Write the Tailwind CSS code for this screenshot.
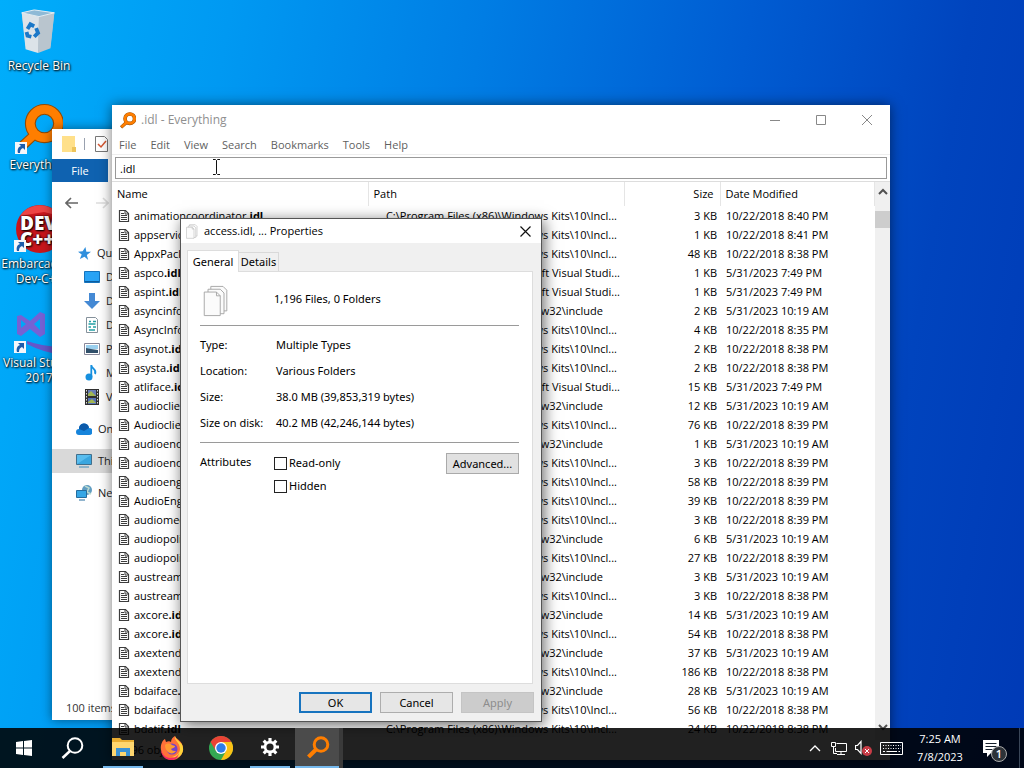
<!DOCTYPE html>
<html lang="en">
<head>
<meta charset="utf-8">
<title>Desktop</title>
<script src="https://cdn.jsdelivr.net/npm/@tailwindcss/browser@4"></script>
</head>
<body class="relative h-screen overflow-hidden bg-[#0060d0] bg-[linear-gradient(100deg,#00aefb_0%,#0099f2_20%,#007de4_42%,#005cd2_65%,#0044be_84%,#003ab6_100%)] font-['Open_Sans','Noto_Sans',sans-serif] text-[11px] leading-4 text-black">

<svg class="hidden">
  <symbol id="magnifier" viewBox="0 0 44 46"><path d="M3 42 17 29" stroke="#8f4a05" stroke-width="9" fill="none"/><circle cx="27" cy="18" r="13" fill="none" stroke="#8f4a05" stroke-width="10"/><path d="M4 41 18 28" stroke="#ff7e00" stroke-width="7" fill="none"/><circle cx="27" cy="18" r="13" fill="none" stroke="#ff7e00" stroke-width="8"/></symbol>
  <symbol id="doc" viewBox="0 0 12 14"><path d="M1.500 1.500h6l3 3v8h-9z" fill="#fff" stroke="#3c3c3c" stroke-width="1.200"/><path d="M7 1.500v3.500h3.500M3 4.500h3M3 6.500h6M3 8.500h6M3 10.500h6" fill="none" stroke="#3c3c3c"/></symbol>
  <symbol id="shortcut" viewBox="0 0 12 12"><path d="M0 0h12v12H0z" fill="#f4f6fa"/><path d="M4 2h6v6L8 6C6 7 5 8 5 11H3C2 8 3 5 6 4z" fill="#1c5cab"/></symbol>
  <symbol id="pages" viewBox="0 0 26 34"><g fill="#fbfbfb" stroke="#a5a5a5"><path d="M7.500 1.500h13l4 4v22h-17z"/><path d="M4.500 4.500h13l4 4v22h-17z"/><path d="M.5 7.500h13l4 4v21H.5z"/><path d="M13.500 7.500v4h4" fill="none"/></g></symbol>
</svg>

<!-- Desktop shortcuts -->
<nav class="flex w-[78px] flex-col text-center text-[12px] text-white [text-shadow:1px_1px_2px_#000,0_0_2px_#000]">
  <a href="#" class="flex h-[98px] flex-col items-center pt-2">
    <svg class="h-[46px] w-10" viewBox="0 0 40 48"><path d="m2 5 13-3 21 3-4 35-13 4-13-4z" fill="#b5c2cc"/><path d="m2 5 18 4-1 38-13-4z" fill="#dce3e8"/><path d="m20 9 16-4-4 37-13 5z" fill="#b9c5ce"/><path d="m2 5 13-3 21 3-16 4z" fill="#8fbad6" stroke="#e4edf2"/><g fill="none" stroke="#1b78c8" stroke-width="4"><path d="m8 22 3-5 4 2"/><path d="m17 21 2 5-4 4"/><path d="m12 30-4-1-1-4"/></g></svg>
    <span class="pt-1">Recycle Bin</span>
  </a>
  <a href="#" class="flex h-[106px] flex-col items-center pt-1.5">
    <span class="relative block"><svg class="h-[50px] w-12"><use href="#magnifier"/></svg><svg class="absolute bottom-0 left-0 size-3"><use href="#shortcut"/></svg></span>
    <span class="pt-[3px]">Everything</span>
  </a>
  <a href="#" class="flex h-[102px] flex-col items-center">
    <span class="relative block"><svg class="size-[50px]" viewBox="0 0 50 50"><circle cx="26" cy="25" r="24" fill="#c8161c"/><path d="M6 12a24 24 0 0 1 40 0L30 8z" fill="#e44"/><text x="6" y="26" font-family="Open Sans" font-size="19" font-weight="800" fill="#fff">DEV</text><text x="6" y="42" font-family="Open Sans" font-size="19" font-weight="800" fill="#fff">C++</text></svg><svg class="absolute bottom-0.5 left-0 size-3"><use href="#shortcut"/></svg></span>
    <span class="pt-0.5 leading-[15px]">Embarcadero<br>Dev-C++</span>
  </a>
  <a href="#" class="flex h-[90px] flex-col items-center pt-0.5">
    <span class="relative block"><svg class="h-[47px] w-[50px]" viewBox="0 0 50 47"><path d="m3 8 4-1 9 6L26 4l5 2v20l-5 3-10-8-9 7-4-2zm4 4v8l5-4zm19-1-6 5 6 6z" fill="#7562d4"/><path d="M13 33q14 5 33 6V4l4 2v41q-20-2-37-11z" fill="#6557c9"/></svg><svg class="absolute bottom-0.5 left-0 size-3"><use href="#shortcut"/></svg></span>
    <span class="leading-[15px]">Visual Studio<br>2017</span>
  </a>
</nav>

<!-- File Explorer window -->
<section class="absolute top-[129px] bottom-12 left-[52px] flex w-[400px] flex-col bg-white shadow-[0_0_10px_#0007]">
  <header class="flex h-[30px] items-center pl-2.5">
    <svg class="h-4 w-3.5" viewBox="0 0 14 16"><path d="M0 0h13v11l1 1v4H0z" fill="#ffe08a"/><path d="M10 11h4v5h-4z" fill="#edc45b"/></svg>
    <span class="ml-2 h-3 w-px bg-gray-400"></span>
    <svg class="ml-2.5 h-4 w-[13px]" viewBox="0 0 13 16"><path d="M.5.5h9l3 3v12H.5z" fill="#fff" stroke="#777"/><path d="m3 8 3 3 5-6" fill="none" stroke="#d4552f" stroke-width="1.500"/></svg>
  </header>
  <button class="h-[23px] w-14 bg-[#0f62b0] text-white">File</button>
  <div class="flex h-[43px] gap-4 pt-[15px] pl-[13px]">
    <svg class="h-3 w-3.5" viewBox="0 0 14 12"><path d="M13 6H1m5-5L1 6l5 5" fill="none" stroke="#666" stroke-width="1.600"/></svg>
    <svg class="h-3 w-3.5" viewBox="0 0 14 12"><path d="M1 6h12M8 1l5 5-5 5" fill="none" stroke="#ddd" stroke-width="1.600"/></svg>
  </div>
  <nav class="flex grow flex-col pt-4 text-[#222] *:flex *:h-6 *:shrink-0 *:items-center">
    <a href="#" class="gap-1.5 pl-[26px]"><svg class="size-[13px]" viewBox="0 0 14 14"><path d="m8 0 1 5h5L9.500 8.500 11 14 7 10.500 2 13l2-5L0 5l5-.5z" fill="#2f8fdd"/></svg>Quick access</a>
    <a href="#" class="gap-1.5 pl-8"><svg class="h-3 w-4" viewBox="0 0 16 12"><path d="M.5.5h15v11H.5z" fill="#29a3f5" stroke="#1573bd"/><path d="M1 10.500h14" stroke="#0c5d9f"/></svg>Desktop</a>
    <a href="#" class="gap-1.5 pl-8"><svg class="size-4" viewBox="0 0 16 16"><path d="M5 0h6v8h5l-8 8-8-8h5z" fill="#4489d4"/></svg>Downloads</a>
    <a href="#" class="gap-1.5 pl-8"><svg class="size-4" viewBox="0 0 16 16"><path d="M2.500.5h9l2 2v13h-11z" fill="#fff" stroke="#85919b"/><path d="M5 4.500h2m2 0h3M4.500 7h7m-7 3H7m2 0h3m-7 3h6" stroke="#23a0a5" stroke-width="1.500"/></svg>Documents</a>
    <a href="#" class="gap-1.5 pl-8"><svg class="h-3 w-4" viewBox="0 0 16 12"><path d="M.5.5h15v11H.5z" fill="#fff" stroke="#889"/><path d="M2 2h12v4H2z" fill="#9ad0ef"/><path d="m2 5 5 1 7 1v3H2z" fill="#31506a"/></svg>Pictures</a>
    <a href="#" class="gap-1.5 pl-8"><svg class="size-4" viewBox="0 0 16 16"><circle cx="5" cy="12" r="3.500" fill="#1690df"/><path d="M7.300 12V0c0 4 6 4 3.700 9" fill="none" stroke="#1690df" stroke-width="1.800"/></svg>Music</a>
    <a href="#" class="gap-1.5 pl-8"><svg class="size-4" viewBox="0 0 16 16"><path d="M1 0h14v16H1z" fill="#303030"/><path d="M4 1h8v6H4z" fill="#687cb8"/><path d="M4 9h8v6H4z" fill="#5871b8"/><path d="m4 5 3-3 5 5H4m0 6 4-3 4 4H4" fill="#a2b652"/><path d="M2.500 1v14m11-14v14" stroke="#ddd" stroke-dasharray="1.500 1.500"/></svg>Videos</a>
    <a href="#" class="mt-2 gap-1.5 pl-6"><svg class="h-3 w-4" viewBox="0 0 16 12"><path d="M3 12a3 3 0 0 1 0-6 5 5 0 0 1 10-1 3.500 3.500 0 0 1 0 7z" fill="#1684db"/><path d="M3 6a5 5 0 0 1 10-1L8 8z" fill="#0b5aaa"/></svg>OneDrive</a>
    <a href="#" class="mt-2 gap-1.5 bg-[#d9d9d9] pl-6"><svg class="h-3.5 w-4" viewBox="0 0 16 14"><path d="M.5.5h15v10H.5z" fill="#59bdee" stroke="#416f8c"/><path d="M1 10 15 1v9z" fill="#3aa6df"/><path d="M3 13h10" stroke="#438dba"/></svg>This PC</a>
    <a href="#" class="mt-2 gap-1.5 pl-6"><svg class="size-4" viewBox="0 0 16 16"><circle cx="11" cy="5" r="5" fill="#609dc1"/><path d="m9 1 4 2-2 4 4 2" stroke="#b9d9d0" stroke-width="1.500" fill="none"/><path d="M.5 5.500h10v7H.5z" fill="#35a6e5" stroke="#256c9d"/><path d="M3 15h6" stroke="#256c9d"/></svg>Network</a>
  </nav>
  <footer class="h-5 pl-3.5 text-[#333]">100 items</footer>
</section>

<!-- Everything window -->
<section class="absolute top-[105px] bottom-2 left-28 flex w-[778px] flex-col bg-white shadow-[0_0_12px_#0008]">
  <header class="flex h-[30px] shrink-0 items-center pl-2 text-[#8f8f8f]">
    <svg class="h-[17px] w-4"><use href="#magnifier"/></svg>
    <h1 class="grow pl-[5px] text-[12px]">.idl - Everything</h1>
    <button aria-label="Minimize" class="flex w-[46px] justify-center"><svg class="size-2.5"><path d="M0 5.500h10" stroke="#888"/></svg></button>
    <button aria-label="Maximize" class="flex w-[46px] justify-center"><svg class="size-2.5"><path d="M.5.5h9v9h-9z" fill="none" stroke="#888"/></svg></button>
    <button aria-label="Close" class="flex w-[46px] justify-center"><svg class="size-2.5"><path d="m0 0 10 10M10 0 0 10" stroke="#888"/></svg></button>
  </header>
  <nav class="flex h-5 shrink-0 items-center gap-3.5 border-b border-[#eee] pl-[7px] text-[#5f5f5f]">
    <button>File</button><button>Edit</button><button>View</button><button>Search</button><button>Bookmarks</button><button>Tools</button><button>Help</button>
  </nav>
  <div class="h-[26px] shrink-0 px-[3px] pt-0.5"><input aria-label="Search" value=".idl" class="block h-[22px] w-full border border-[#999] px-1"></div>
  <div class="flex min-h-0 grow border-t border-[#ddd]">
    <div class="min-w-0 grow overflow-hidden">
      <table class="w-full table-fixed border-collapse whitespace-nowrap">
        <colgroup><col class="w-64"><col class="w-64"><col class="w-24"><col></colgroup>
        <thead><tr class="h-6 text-left *:border-r *:border-[#e5e5e5] *:p-0 *:font-normal"><th><span class="pl-[5px]">Name</span></th><th><span class="pl-[5px]">Path</span></th><th class="text-right"><span class="pr-1.5">Size</span></th><th><span class="pl-[5px]">Date Modified</span></th></tr></thead>
        <tbody id="files"></tbody>
      </table>
    </div>
    <div class="flex w-[17px] flex-col items-center bg-[#f0f0f0]">
      <svg class="mt-1.5 h-2 w-2.5"><path d="m1 6 4-4 4 4" fill="none" stroke="#505050" stroke-width="2"/></svg>
      <div class="mt-[15px] h-[17px] w-[15px] bg-[#cdcdcd]"></div>
      <svg class="mt-auto mb-2 h-2 w-2.5"><path d="m1 1 4 4 4-4" fill="none" stroke="#505050" stroke-width="2"/></svg>
    </div>
  </div>
  <footer class="h-5 shrink-0 bg-white pt-0.5 pl-1">1,196 objects</footer>
</section>

<!-- Properties dialog -->
<section role="dialog" aria-label="Properties" class="absolute top-[218px] left-[180px] flex h-[504px] w-[362px] flex-col border border-[#555] bg-[#f0f0f0] font-['Noto_Sans',sans-serif] shadow-[2px_3px_14px_#0009]">
  <header class="flex h-6 shrink-0 items-center bg-white pr-2.5 pl-[5px]">
    <svg class="h-[15px] w-3"><use href="#pages"/></svg>
    <h2 class="grow pl-1.5 font-['Open_Sans']">access.idl, ... Properties</h2>
    <button aria-label="Close"><svg class="size-[11px]"><path d="m.5.500 10 10m0-10-10 10" stroke="#111" stroke-width="1.200"/></svg></button>
  </header>
  <div class="flex h-7 shrink-0 items-end pl-1.5">
    <button class="z-10 -mb-px h-[22px] w-[52px] border border-b-0 border-[#ddd] bg-white">General</button>
    <button class="h-[19px] w-10 border border-b-0 border-l-0 border-[#d9d9d9]">Details</button>
  </div>
  <div class="mr-2 ml-1.5 flex grow flex-col border border-[#ddd] bg-white pr-[13px] pl-3">
    <div class="flex h-[54px] items-center border-b border-[#9a9a9a] pl-[3px]">
      <svg class="mt-1 h-8 w-[26px]"><use href="#pages"/></svg><span class="pl-[45px]">1,196 Files, 0 Folders</span>
    </div>
    <dl class="grid grid-cols-[76px_1fr] gap-y-2.5 border-b border-[#9a9a9a] pt-[11px] pb-[11px]">
      <dt>Type:</dt><dd>Multiple Types</dd>
      <dt>Location:</dt><dd>Various Folders</dd>
      <dt>Size:</dt><dd>38.0 MB (39,853,319 bytes)</dd>
      <dt>Size on disk:</dt><dd>40.2 MB (42,246,144 bytes)</dd>
    </dl>
    <div class="flex items-start pt-2.5">
      <span class="w-[74px] pt-px">Attributes</span>
      <div class="flex grow flex-col gap-[7px] pt-0.5">
        <label class="flex items-center gap-0.5"><input type="checkbox" class="size-[13px] appearance-none border border-[#222] bg-white">Read-only</label>
        <label class="flex items-center gap-0.5"><input type="checkbox" class="size-[13px] appearance-none border border-[#222] bg-white">Hidden</label>
      </div>
      <button class="h-[21px] w-[73px] border border-[#aaa] bg-[#e1e1e1]">Advanced...</button>
    </div>
  </div>
  <footer class="flex h-[37px] shrink-0 items-center justify-end gap-2 pr-[7px]">
    <button class="h-[21px] w-[73px] border-2 border-[#1874bf] bg-[#e6e6e6]">OK</button>
    <button class="h-[21px] w-[73px] border border-[#adadad] bg-[#e6e6e6]">Cancel</button>
    <button disabled class="h-[21px] w-[73px] border border-[#c4c4c4] bg-[#cccccc] text-[#8d8d8d]">Apply</button>
  </footer>
</section>

<!-- Text cursor -->
<svg class="absolute top-[159px] left-[212px] h-4 w-[9px]"><path d="M1 .5h2.500l1 1 1-1H8m-3.500 1v13m-3.500 1h2.500l1-1 1 1H8" fill="none" stroke="#111"/></svg>

<!-- Taskbar -->
<footer class="absolute inset-x-0 bottom-0 flex h-10 bg-black/87 text-white">
  <button aria-label="Start" class="flex w-12 items-center justify-center"><svg class="size-4" viewBox="0 0 16 16"><path d="m0 2 7-1v6.500H0zm8-1 8-1v7.500H8zM0 8.500h7V15l-7-1zm8 0h8V16l-8-1z" fill="#fff"/></svg></button>
  <button aria-label="Search" class="flex w-12 items-center justify-center"><svg class="h-[22px] w-[23px]" viewBox="0 0 23 22"><circle cx="14" cy="8.500" r="7.300" fill="none" stroke="#fff" stroke-width="2"/><path d="m9 14-7.500 7" stroke="#fff" stroke-width="2.500"/></svg></button>
  <button aria-label="File Explorer" class="ml-0.5 flex w-[49px] flex-col items-center"><span class="flex grow items-center"><svg class="h-[18px] w-[22px]" viewBox="0 0 22 18"><path d="M0 0h8l2 2h12v16H0z" fill="#e9ad32"/><path d="M0 4h22v14H0z" fill="#ffd66f"/><path d="M4 18v-8h14v8h-4v-4H8v4z" fill="#3c92d4"/></svg></span><span class="h-0.5 w-10 bg-[#76b9ed]"></span></button>
  <button aria-label="Firefox" class="flex w-[49px] items-center justify-center"><svg class="size-6" viewBox="0 0 24 24"><path d="M1 14C0 8 3 4 5 3l1 3c2-1 4-1 5 0 0-3 2-5 4-6 0 3 8 4 8 13 0 6-5 11-11 11S2 20 1 14z" fill="#ff7139"/><path d="M15 0c-1 5 5 6 5 13 0 3-3 7-8 8 7 3 12-4 11-9 0-6-7-7-8-12z" fill="#ffd43a"/><path d="M1 14c2 7 7 8 10 8 5 0 7-3 8-5-1 5-4 7-8 7-5 0-10-4-10-10z" fill="#f52764"/><circle cx="12" cy="13" r="5.500" fill="#7542c9"/><path d="M5 9c3-3 6-1 7 0l3 1c0 2-3 2-4 3 1 2 3 2 5 2-3 5-11 2-11-6z" fill="#ff9b31"/></svg></button>
  <button aria-label="Chrome" class="flex w-[49px] items-center justify-center"><svg class="size-6" viewBox="0 0 24 24"><circle cx="12" cy="12" r="12" fill="#34a853"/><path d="M1.600 6A12 12 0 0 1 22.400 6H12L7 15z" fill="#ea4335"/><path d="M22.400 6A12 12 0 0 1 12 24l5-9-5-9z" fill="#fbc116"/><circle cx="12" cy="12" r="6" fill="#fff"/><circle cx="12" cy="12" r="4.700" fill="#2f7de9"/></svg></button>
  <button aria-label="Settings" class="flex w-[50px] flex-col items-center"><span class="flex grow items-center"><svg class="size-[18px]" viewBox="0 0 20 20"><circle cx="10" cy="10" r="5.500" fill="none" stroke="#fff" stroke-width="3"/><path d="M10 0v4m0 12v4M0 10h4m12 0h4M3 3l3 3m8 8 3 3m0-14-3 3M3 17l3-3" stroke="#fff" stroke-width="3.500"/></svg></span><span class="h-0.5 w-10 bg-[#76b9ed]"></span></button>
  <button aria-label="Everything" class="flex w-12 flex-col items-center border-r-4 border-[#3a3a3a] bg-[#4b4b4b]"><span class="flex grow items-center pl-0.5"><svg class="h-[22px] w-[23px]" viewBox="0 0 23 22"><circle cx="14" cy="8.500" r="6.800" fill="none" stroke="#ff7e00" stroke-width="3"/><path d="M9 13.500 1.500 21" stroke="#ff7e00" stroke-width="4"/></svg></span><span class="h-0.5 w-full bg-[#76b9ed]"></span></button>
  <div class="ml-auto flex items-center">
    <svg class="h-2 w-3"><path d="m1 7 5-5 5 5" fill="none" stroke="#fff" stroke-width="1.300"/></svg>
    <svg class="ml-2.5 h-[15px] w-[17px]" viewBox="0 0 17 15"><path d="M5.500 2.500h10v8h-11V7M10 10.500v3m-4 0h8M.5 1.500h4v4h-4zM2.500 5v7.500H6" fill="none" stroke="#fff"/></svg>
    <svg class="ml-[7px] h-4 w-[17px]" viewBox="0 0 17 16"><path d="M.5 5.500h2l3.500-4v12l-3.500-4h-2z" fill="none" stroke="#fff" stroke-width="1.200"/><circle cx="12" cy="11" r="5" fill="#c83c46"/><path d="m10 9 4 4m0-4-4 4" stroke="#fff"/></svg>
    <svg class="ml-2 h-[13px] w-[23px]" viewBox="0 0 23 13"><path d="M.5.5h22v12H.5z" fill="none" stroke="#fff"/><path d="M3 3.500h18M3 6.500h18" stroke="#fff" stroke-dasharray="1 1.500"/><path d="M3 9.500h2m1.500 0H17m1.500 0H20" stroke="#fff"/></svg>
    <time class="w-[74px] text-center leading-[18px]">7:25 AM<br>7/8/2023</time>
    <button aria-label="Notifications" class="relative ml-1.5 w-9"><svg class="h-[17px] w-4" viewBox="0 0 16 17"><path d="M0 0h16v13H8l-4 4v-4H0z" fill="#fff"/><path d="M2.500 3.500h11m-11 3h11m-11 3h7" stroke="#16202c"/></svg><span class="absolute top-1.5 left-2 flex size-4 items-center justify-center rounded-full border border-[#aaa] bg-[#2d3238] font-semibold">1</span></button>
    <span class="h-full w-px bg-[#3a4658]"></span><span class="w-1"></span>
  </div>
</footer>

<script>
const kits = 'C:\\Program Files (x86)\\Windows Kits\\10\\Incl...';
const studio = 'C:\\Program Files (x86)\\Microsoft Visual Studi...';
const gcc = 'C:\\Program Files\\mingw\\i686-w64-mingw32\\include';
const rows = [
  ['animationcoordinator', kits, 3, '10/22/2018 8:40 PM'],
  ['appserviceinterop', kits, 1, '10/22/2018 8:41 PM'],
  ['AppxPackaging', kits, 48, '10/22/2018 8:38 PM'],
  ['aspco', studio, 1, '5/31/2023 7:49 PM'],
  ['aspint', studio, 1, '5/31/2023 7:49 PM'],
  ['asyncinfo', gcc, 2, '5/31/2023 10:19 AM'],
  ['AsyncInfo', kits, 4, '10/22/2018 8:35 PM'],
  ['asynot', kits, 2, '10/22/2018 8:38 PM'],
  ['asysta', kits, 2, '10/22/2018 8:38 PM'],
  ['atliface', studio, 15, '5/31/2023 7:49 PM'],
  ['audioclient', gcc, 12, '5/31/2023 10:19 AM'],
  ['Audioclient', kits, 76, '10/22/2018 8:39 PM'],
  ['audioendpoints', gcc, 1, '5/31/2023 10:19 AM'],
  ['audioendpoints', kits, 3, '10/22/2018 8:39 PM'],
  ['audioenginebaseapo', kits, 58, '10/22/2018 8:39 PM'],
  ['AudioEngineEndpoint', kits, 39, '10/22/2018 8:39 PM'],
  ['audiomediatype', kits, 3, '10/22/2018 8:39 PM'],
  ['audiopolicy', gcc, 6, '5/31/2023 10:19 AM'],
  ['audiopolicy', kits, 27, '10/22/2018 8:39 PM'],
  ['austream', gcc, 3, '5/31/2023 10:19 AM'],
  ['austream', kits, 3, '10/22/2018 8:38 PM'],
  ['axcore', gcc, 14, '5/31/2023 10:19 AM'],
  ['axcore', kits, 54, '10/22/2018 8:38 PM'],
  ['axextend', gcc, 37, '5/31/2023 10:19 AM'],
  ['axextend', kits, 186, '10/22/2018 8:38 PM'],
  ['bdaiface', gcc, 28, '5/31/2023 10:19 AM'],
  ['bdaiface', kits, 56, '10/22/2018 8:38 PM'],
  ['bdatif', kits, 24, '10/22/2018 8:38 PM'],
];
document.getElementById('files').innerHTML = rows.map(([name, path, size, date]) => `
  <tr class="h-[19px] *:p-0">
    <td><span class="flex items-center gap-1 pl-1.5"><svg class="h-3.5 w-3"><use href="#doc"/></svg><span>${name}<b>.idl</b></span></span></td>
    <td><span class="flex justify-end ${path === gcc ? 'w-[235px]' : path === studio ? 'w-[252px]' : 'w-[249px]'}">${path}</span></td>
    <td class="text-right"><span class="pr-[3px]">${size} KB</span></td>
    <td><span class="pl-1.5">${date}</span></td>
  </tr>`).join('');
</script>
</body>
</html>
